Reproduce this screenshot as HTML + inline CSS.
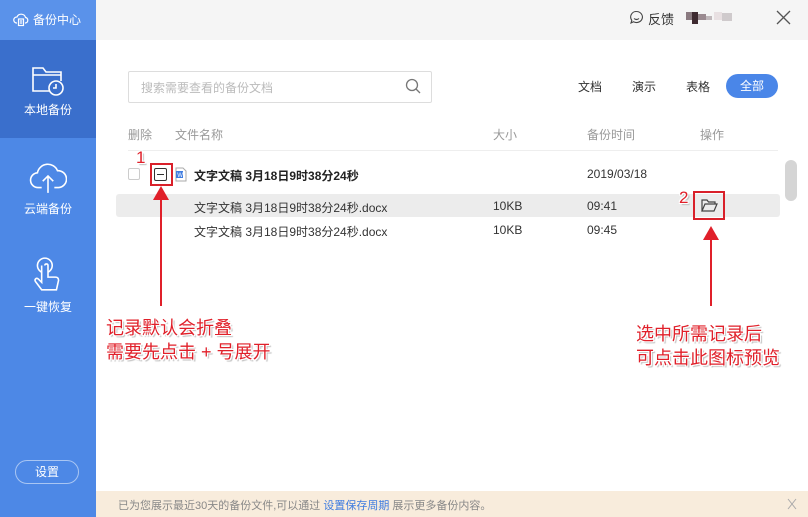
<!DOCTYPE html>
<html><head><meta charset="utf-8">
<style>
*{margin:0;padding:0;box-sizing:border-box}
body{width:808px;height:517px;overflow:hidden;font-family:"Liberation Sans","Noto Sans CJK SC",sans-serif;background:#fff;position:relative;font-size:12px;color:#333}
.abs{position:absolute}
.side{left:0;top:0;width:96px;height:517px;background:#4d88e6}
.sidetop{left:0;top:0;width:96px;height:40px;background:#5a92ea;color:#fff;font-size:12px}
.act{left:0;top:40px;width:96px;height:98px;background:#3a6fcc}
.sl{color:#fff;font-size:12px;width:96px;text-align:center}
.topbar{left:96px;top:0;width:712px;height:40px;background:#f5f5f5}
.red{color:#e0202a;font-size:18px;text-shadow:1px 1px 0 #fff,-1px -1px 0 #fff,1px -1px 0 #fff,-1px 1px 0 #fff,2px 2px 1px #bbb;line-height:24px}
.hd{color:#999;font-size:12px}
</style></head><body>
<div class="abs side"></div>
<div class="abs sidetop">
<svg class="abs" style="left:13px;top:11px" width="16" height="16" viewBox="0 0 16 16" fill="none" stroke="#fff" stroke-width="1.2"><path d="M4 12H3.5A3 3 0 0 1 4 6a4.5 4.5 0 0 1 8.5 0.5A2.8 2.8 0 0 1 12.5 12H12"/><rect x="5.5" y="8" width="5" height="6.5"/><path d="M6.8 10h2.4M6.8 12h2.4"/></svg>
<div class="abs" style="left:33px;top:11px">备份中心</div></div>
<div class="abs act"></div>
<svg class="abs" style="left:31px;top:66px" width="34" height="30" viewBox="0 0 34 30" fill="none" stroke="#fff" stroke-width="1.6"><path d="M19 25H2V2h10l3 4h15v9"/><path d="M2 9h28"/><circle cx="25" cy="22" r="7"/><path d="M25 18v4h-3"/></svg>
<div class="abs sl" style="top:101px">本地备份</div>
<svg class="abs" style="left:29px;top:160px" width="38" height="34" viewBox="0 0 36 32" fill="none" stroke="#fff" stroke-width="1.5"><path d="M12 26H9A7 7 0 0 1 8 12 10 10 0 0 1 27 10a8 8 0 0 1 1 16h-4"/><path d="M18 31V15M13 20l5-5 5 5"/></svg>
<div class="abs sl" style="top:200px">云端备份</div>
<svg class="abs" style="left:31px;top:256px" width="34" height="38" viewBox="0 0 32 36" fill="none" stroke="#fff" stroke-width="1.5"><circle cx="13" cy="9" r="7"/><path d="M10 9v16l-3-3c-2-2-4 0-3 2l6 8h14l2-9c0-2-1-3-3-3h-7V9c0-2-3-2-3 0" fill="#4d88e6"/></svg>
<div class="abs sl" style="top:298px">一键恢复</div>
<div class="abs" style="left:15px;top:460px;width:64px;height:24px;border:1px solid #a9c6f3;border-radius:12px;color:#fff;text-align:center;line-height:22px">设置</div>

<div class="abs topbar"></div>
<svg class="abs" style="left:629px;top:10px" width="15" height="15" viewBox="0 0 15 15" fill="none" stroke="#444" stroke-width="1.1"><path d="M7.5 1.5a6 5.5 0 1 1-3 10.3L2 13l.8-2.7A5.5 5.5 0 0 1 7.5 1.5z"/><path d="M5 8.5q2.5 2 5 0"/></svg>
<div class="abs" style="left:648px;top:9px;font-size:13px;color:#333">反馈</div>
<div class="abs" style="left:686px;top:12px;width:6px;height:8px;background:#8a7a80"></div>
<div class="abs" style="left:692px;top:12px;width:6px;height:12px;background:#3e2a30"></div>
<div class="abs" style="left:698px;top:14px;width:8px;height:6px;background:#9a8a90"></div>
<div class="abs" style="left:706px;top:16px;width:6px;height:4px;background:#c0b8bb"></div>
<div class="abs" style="left:714px;top:12px;width:8px;height:8px;background:#e8e0e2"></div>
<div class="abs" style="left:722px;top:13px;width:10px;height:8px;background:#cfcacc"></div>
<svg class="abs" style="left:776px;top:10px" width="15" height="15" viewBox="0 0 15 15" stroke="#555" stroke-width="1.3"><path d="M1 1l13 13M14 1L1 14"/></svg>

<div class="abs" style="left:128px;top:71px;width:304px;height:32px;border:1px solid #ddd;border-radius:2px"></div>
<div class="abs" style="left:141px;top:79px;color:#bbb;font-size:12px">搜索需要查看的备份文档</div>
<svg class="abs" style="left:405px;top:78px" width="16" height="16" viewBox="0 0 16 16" fill="none" stroke="#777" stroke-width="1.3"><circle cx="7" cy="7" r="5.5"/><path d="M11 11l4 4"/></svg>
<div class="abs" style="left:578px;top:78px;font-size:12px">文档</div>
<div class="abs" style="left:632px;top:78px;font-size:12px">演示</div>
<div class="abs" style="left:686px;top:78px;font-size:12px">表格</div>
<div class="abs" style="left:726px;top:74px;width:52px;height:24px;background:#4a86e8;border-radius:12px;color:#fff;text-align:center;line-height:24px">全部</div>

<div class="abs hd" style="left:128px;top:126px">删除</div>
<div class="abs hd" style="left:175px;top:126px">文件名称</div>
<div class="abs hd" style="left:493px;top:126px">大小</div>
<div class="abs hd" style="left:587px;top:126px">备份时间</div>
<div class="abs hd" style="left:700px;top:126px">操作</div>
<div class="abs" style="left:128px;top:150px;width:650px;height:1px;background:#eee"></div>

<div class="abs" style="left:128px;top:168px;width:12px;height:12px;border:1px solid #ccc;border-radius:2px"></div>
<div class="abs" style="left:150px;top:163px;width:23px;height:23px;border:2px solid #d9202a"></div>
<div class="abs" style="left:154px;top:168px;width:13px;height:13px;border:1px solid #333;border-radius:2px"></div>
<div class="abs" style="left:157px;top:174px;width:7px;height:1px;background:#333"></div>
<div class="abs red" style="left:136px;top:146px;font-size:17px">1</div>
<svg class="abs" style="left:175px;top:167px" width="12" height="15" viewBox="0 0 12 15"><path d="M1 1h7l3 3v10H1z" fill="#fff" stroke="#aaa"/><rect x="1" y="4" width="7" height="7" fill="#3f7ce0"/><text x="2.2" y="10" font-size="6" fill="#fff" font-family="Liberation Sans">W</text></svg>
<div class="abs" style="left:194px;top:167px;font-weight:bold;font-size:12px;color:#222">文字文稿 3月18日9时38分24秒</div>
<div class="abs" style="left:587px;top:167px">2019/03/18</div>

<div class="abs" style="left:116px;top:194px;width:664px;height:23px;background:#ececec;border-radius:3px"></div>
<div class="abs" style="left:194px;top:199px">文字文稿 3月18日9时38分24秒.docx</div>
<div class="abs" style="left:493px;top:199px">10KB</div>
<div class="abs" style="left:587px;top:199px">09:41</div>
<div class="abs" style="left:194px;top:223px">文字文稿 3月18日9时38分24秒.docx</div>
<div class="abs" style="left:493px;top:223px">10KB</div>
<div class="abs" style="left:587px;top:223px">09:45</div>
<div class="abs" style="left:693px;top:191px;width:32px;height:29px;border:2px solid #d9202a"></div>
<svg class="abs" style="left:701px;top:199px" width="17" height="13" viewBox="0 0 17 13" fill="none" stroke="#444" stroke-width="1.2"><path d="M1 12V1h5l1.5 2H14v2"/><path d="M1 12l3-7h12l-3 7z"/></svg>
<div class="abs red" style="left:679px;top:186px;font-size:17px">2</div>
<div class="abs" style="left:785px;top:160px;width:12px;height:41px;background:#d5d5d5;border-radius:6px"></div>

<div class="abs" style="left:160px;top:196px;width:2px;height:110px;background:#e0202a"></div>
<svg class="abs" style="left:153px;top:186px" width="16" height="14"><path d="M8 0L16 14H0z" fill="#e0202a"/></svg>
<div class="abs" style="left:710px;top:236px;width:2px;height:70px;background:#e0202a"></div>
<svg class="abs" style="left:703px;top:226px" width="16" height="14"><path d="M8 0L16 14H0z" fill="#e0202a"/></svg>
<div class="abs red" style="left:106px;top:316px">记录默认会折叠<br>需要先点击 + 号展开</div>
<div class="abs red" style="left:636px;top:322px">选中所需记录后<br>可点击此图标预览</div>

<div class="abs" style="left:96px;top:491px;width:712px;height:26px;background:#f8ecdc"></div>
<div class="abs" style="left:118px;top:497px;color:#888;font-size:11px">已为您展示最近30天的备份文件,可以通过 <span style="color:#3f7ce0">设置保存周期</span> 展示更多备份内容。</div>
<svg class="abs" style="left:787px;top:498px" width="10" height="12" viewBox="0 0 10 12" stroke="#aaa" stroke-width="1"><path d="M1 1l8 10M9 1L1 11"/></svg>
</body></html>
